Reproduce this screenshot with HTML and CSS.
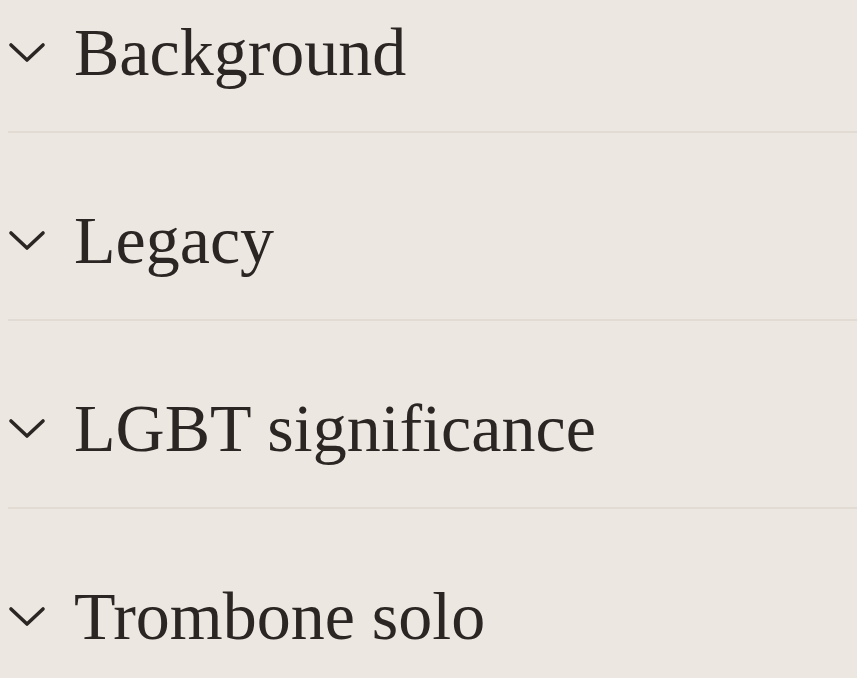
FILE: index.html
```html
<!DOCTYPE html>
<html lang="en">
<head>
  <meta charset="UTF-8" />
  <meta name="viewport" content="width=device-width, initial-scale=1.0"/>
  <title>Contents</title>
  <link rel="stylesheet" href="styles.css">
</head>
<body>
  <main class="sections">
    <section class="section">
      <div class="section-head">
        <svg class="chevron" viewBox="0 0 38 22" width="38" height="22"><path d="M3 4 L19 19 L35 4" /></svg>
        <h2>Background</h2>
      </div>
    </section>
    <section class="section">
      <div class="section-head">
        <svg class="chevron" viewBox="0 0 38 22" width="38" height="22"><path d="M3 4 L19 19 L35 4" /></svg>
        <h2>Legacy</h2>
      </div>
    </section>
    <section class="section">
      <div class="section-head">
        <svg class="chevron" viewBox="0 0 38 22" width="38" height="22"><path d="M3 4 L19 19 L35 4" /></svg>
        <h2>LGBT significance</h2>
      </div>
    </section>
    <section class="section">
      <div class="section-head">
        <svg class="chevron" viewBox="0 0 38 22" width="38" height="22"><path d="M3 4 L19 19 L35 4" /></svg>
        <h2>Trombone solo</h2>
      </div>
    </section>
  </main>
</body>
</html>
```
FILE: styles.css
```css
body {
  margin: 0;
  background: #ede7e1;
  color: #2b2623;
  font-family: 'Liberation Serif', 'DejaVu Serif', serif;
  overflow: hidden;
}
.sections {
  padding-left: 8px;
}
.section {
  padding: 73px 0 45px 0;
  border-bottom: 2px solid #e2dbd4;
}
.section:first-child {
  padding-top: 18px;
}
.section:last-child {
  border-bottom: none;
}
.section-head {
  display: flex;
  align-items: center;
  gap: 28px;
}
.chevron {
  flex: none;
  fill: none;
  stroke: #2b2623;
  stroke-width: 3.6;
  stroke-linecap: round;
  stroke-linejoin: round;
}
.section-head h2 {
  margin: 0;
  font-size: 68px;
  font-weight: normal;
  line-height: 68px;
  letter-spacing: 0;
}
```
